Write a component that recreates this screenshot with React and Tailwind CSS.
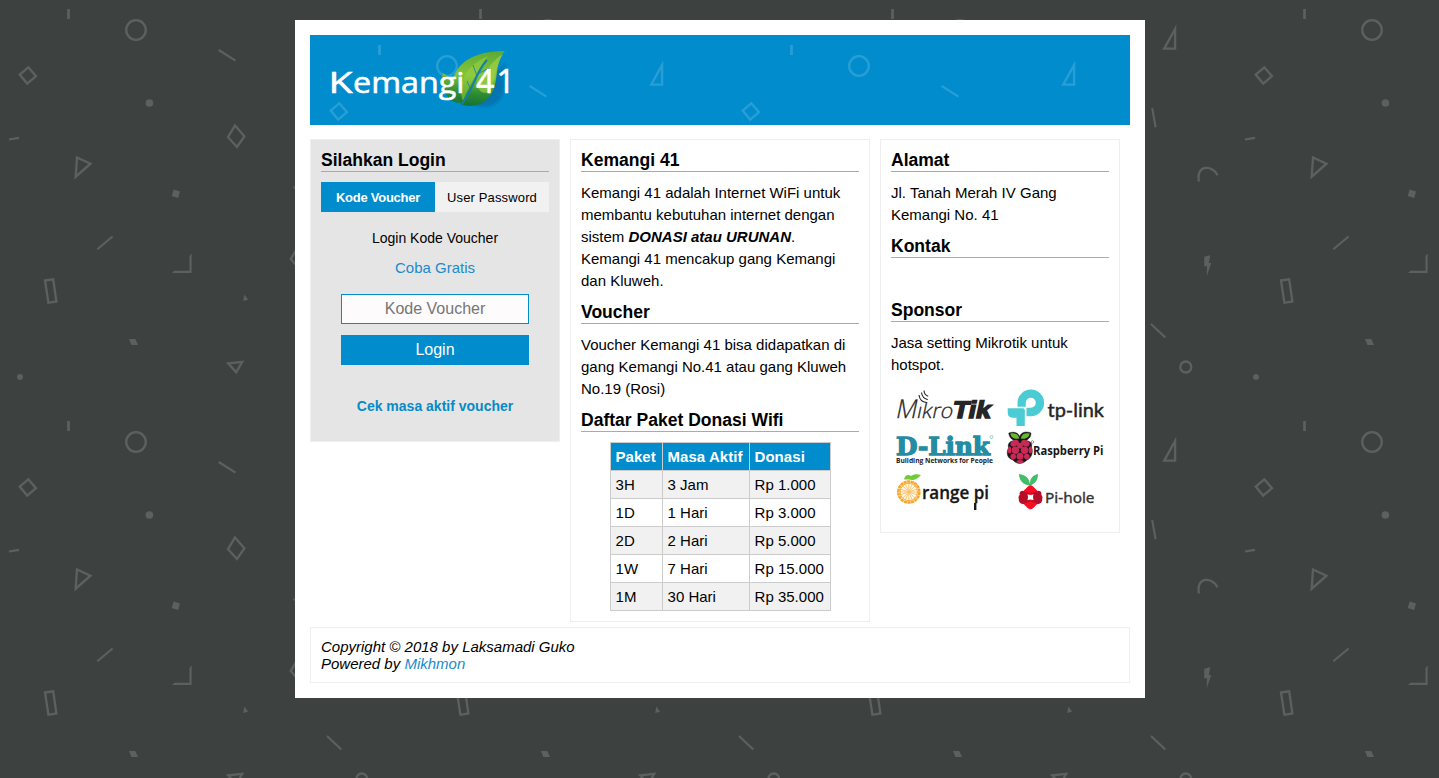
import React from "react";

function Confetti({ id, opacity, offset = 0 }) {
  return (
    <svg className="absolute inset-0 h-full w-full" aria-hidden="true">
      <defs>
        <pattern id={id} x={offset} y={offset} width="412" height="412" patternUnits="userSpaceOnUse">
          <g fill="none" stroke="#fff" strokeOpacity={opacity} strokeWidth="2.3" strokeMiterlimit="10">
            <path d="M68.5 9v10" strokeWidth="2.7" />
            <circle cx="136" cy="30" r="9.8" />
            <path d="M218.7 50l16.8 10.7M9 139.5l10-1.6M97.3 249.3l15.3-12.8M328.2 108l3.4 19.2M327 324l14.3 13.5" strokeWidth="2.1" />
            <path d="M28.3 67.3L19.7 74.6L27.2 83.6L36 76.2Z" />
            <path d="M235 125.5L244.4 136.3L237 147L228 137.2Z" />
            <path d="M77 157.5L90.5 163.7L75.7 176.7Z" />
            <path d="M351.1 29V48.7H340.2Z" />
            <path d="M45 280.5L53.2 279.3L56.4 301.5L48.4 302.8Z" />
            <path d="M228.2 363.3L242.2 361.8L236.2 372.3Z" />
            <path d="M297 248.7L290.8 259L298 267.7L308 264L308 253Z" />
            <path d="M375 181.5C371.5 164 389 165 393.5 175.2" />
            <circle cx="361.8" cy="367" r="5.5" />
          </g>
          <g fill="#fff" fillOpacity={opacity}>
            <circle cx="149.4" cy="103" r="3.8" />
            <circle cx="20" cy="377" r="3" />
            <path d="M173.7 189.5L180 191.5L178.2 198L171.7 196Z" />
            <path d="M129 339H135.3L138 345H131.4Z" />
            <path d="M244.4 294.5L248 299.8L243.2 301Z" />
            <path d="M292.8 186L297 188L294 189Z" />
            <path d="M191.6 253.5V273H172L174.4 270.7H189.5V256Z" />
            <path d="M380.3 256.7L386.2 255.3L384.7 263H387.2L382.8 276L383 266.3H380.2Z" />
          </g>
        </pattern>
      </defs>
      <rect width="100%" height="100%" fill={`url(#${id})`} />
    </svg>
  );
}

function BrandLogo() {
  return (
    <svg className="relative mt-2.5" width="240" height="76" viewBox="0 0 240 76" aria-label="Kemangi 41">
      <defs>
        <linearGradient id="leaf" x1="0.6" y1="0" x2="0.5" y2="1">
          <stop offset="0" stopColor="#5eab34" />
          <stop offset="0.45" stopColor="#84c43c" />
          <stop offset="0.78" stopColor="#2c8b34" />
          <stop offset="1" stopColor="#167332" />
        </linearGradient>
        <filter id="soft" x="-30%" y="-30%" width="160%" height="160%">
          <feGaussianBlur stdDeviation="1.6" />
        </filter>
      </defs>
      <g transform="translate(20 0)">
        <path d="M178 17C168 27 181 48 166 58C160 63 153 62 146 60L153 34Z" fill="#08588f" opacity=".45" filter="url(#soft)" />
        <path d="M113 28C118 31 121 34 123 40L122 42C122 28 132 6 175 6C168 13 168 22 166 34C164 55 149 64 133 60L130 58C119 58 115 48 114 42C113 37 111 33 113 28Z" fill="url(#leaf)" />
        <path d="M133 56C128 42 132 22 158 11C149 21 141 38 133 56Z" fill="#9bd13f" opacity=".55" />
        <path d="M147 37C148 48 154 49 160 47C165 38 165 22 173 9C164 14 155 27 147 37Z" fill="#a6d54a" opacity=".6" />
        <path d="M131 60C142 48 145 28 157 15" fill="none" stroke="#127eae" strokeWidth="2" />
        <path d="M141 45L137 36M147 31L143 20M149 28L160 23M130 58C125 53 122 49 118 44" fill="none" stroke="#127eae" strokeWidth=".8" />
      </g>
      <g fontFamily="'Open Sans', sans-serif" fill="#fff" stroke="#fff" strokeWidth=".6">
        <text y="47.5" fontSize="30">
          <tspan x="18.5" textLength="24" lengthAdjust="spacingAndGlyphs">K</tspan>
          <tspan x="43" textLength="111.5" lengthAdjust="spacingAndGlyphs">emangi</tspan>
        </text>
        <text x="166 186.5" y="47.5" fontSize="32">41</text>
      </g>
    </svg>
  );
}

const sponsorText = "'Open Sans', sans-serif";

function MikroTik() {
  return (
    <svg className="overflow-visible" width="111" height="43" aria-label="MikroTik">
      <g transform="translate(4 31.7) skewX(-12)" fill="#252527">
        <text x="0" y="0" fontFamily="'Open Sans', sans-serif" fontSize="26" fontWeight="300" stroke="#252527" strokeWidth=".3" textLength="21" lengthAdjust="spacingAndGlyphs">M</text>
        <text x="21" y="0" fontFamily="'Open Sans', sans-serif" fontSize="21" fontWeight="300" stroke="#252527" strokeWidth=".3" textLength="36" lengthAdjust="spacingAndGlyphs">ıkro</text>
        <text x="56.5" y="0" fontFamily="'Liberation Sans', sans-serif" fontSize="24" fontWeight="700" stroke="#252527" strokeWidth="1.5" textLength="38" lengthAdjust="spacingAndGlyphs">Tik</text>
      </g>
      <path d="M29 9C29.5 13.5 32 16 36.5 16.5M31.5 6.5C32 10.5 34 12.8 37.7 13.6M34 4.5C34.2 7.5 35.5 9.4 38.2 10.3" transform="translate(-1 0)" fill="none" stroke="#252527" strokeWidth="1.1" />
    </svg>
  );
}

function TpLink() {
  return (
    <svg className="overflow-visible" width="107" height="43" aria-label="tp-link">
      <path d="M15.5 20.7V16.7A13.3 13.3 0 1 1 28.8 30.2H24.5V21.7H28.8A5 5 0 1 0 23.8 16.7V20.7Z" fill="#4bcbd4" />
      <path d="M5.7 22.3H21Q22.8 22.3 22.8 24.2V40H14.5V31.8H10.5Q5.7 31.5 5.7 26.5Z" fill="#4bcbd4" />
      <text x="45.5" y="31" fontFamily="Lato, sans-serif" fontSize="20" fill="#252525" stroke="#252525" strokeWidth=".45" textLength="56.5" lengthAdjust="spacingAndGlyphs">tp-link</text>
    </svg>
  );
}

function DLink() {
  return (
    <svg className="overflow-visible" width="111" height="43" aria-label="D-Link">
      <text x="5" y="25.5" fontFamily="'DejaVu Serif', serif" fontSize="24.5" fontWeight="700" fill="#248ca3" stroke="#248ca3" strokeWidth="1.3" textLength="94" lengthAdjust="spacingAndGlyphs">D-Link</text>
      <circle cx="100.5" cy="8" r="1.5" fill="none" stroke="#248ca3" strokeWidth=".4" />
      <text x="5" y="34" fontFamily={sponsorText} fontSize="7.4" fontWeight="700" fill="#222" textLength="97" lengthAdjust="spacingAndGlyphs">Building Networks for People</text>
    </svg>
  );
}

function RaspberryPi() {
  return (
    <svg className="overflow-visible" width="107" height="43" aria-label="Raspberry Pi">
      <path d="M17.5 11C10 13 7 8 6.8 4C12 2 17 4 17.5 8C19 3 24 2 29 4C29 9 25 13 18 11C31 11 30 16 29.5 18C32 25 28 30 25 31C20 36 14 35 11 31C5 29 4 24 6.5 19C5 13 10 11 17.5 11Z" fill="#171717" stroke="#171717" strokeWidth=".5" />
      <path d="M8.3 4.5C13 3.4 16.5 5 17.2 9.4C12 10.8 8.6 8 8.3 4.5ZM27.7 4.5C23 3.4 19.5 5 18.8 9.4C24 10.8 27.4 8 27.7 4.5Z" fill="#67b82e" />
      <g fill="#cc2855">
        <ellipse cx="12.6" cy="14.2" rx="4.4" ry="3" transform="rotate(-25 12.6 14.2)" />
        <ellipse cx="23.4" cy="14.2" rx="4.4" ry="3" transform="rotate(25 23.4 14.2)" />
        <circle cx="18" cy="16.6" r="2.9" />
        <circle cx="13.4" cy="21.2" r="3.7" />
        <circle cx="22.6" cy="21.2" r="3.7" />
        <ellipse cx="7.6" cy="21" rx="1.8" ry="3.6" />
        <ellipse cx="28.4" cy="21" rx="1.8" ry="3.6" />
        <circle cx="18" cy="27.2" r="3.5" />
        <circle cx="11.2" cy="27.6" r="2.8" />
        <circle cx="24.8" cy="27.6" r="2.8" />
        <ellipse cx="18" cy="32.5" rx="3.5" ry="1.5" />
      </g>
      <circle cx="30.5" cy="13" r="1.3" fill="none" stroke="#333" strokeWidth=".5" />
      <text x="31" y="25.7" fontFamily={sponsorText} fontSize="11.8" fontWeight="700" fill="#171717" textLength="70.5" lengthAdjust="spacingAndGlyphs">Raspberry Pi</text>
    </svg>
  );
}

function OrangePi() {
  return (
    <svg className="overflow-visible" width="111" height="43" aria-label="Orange Pi">
      <circle cx="17.8" cy="20" r="10.5" fill="#fff8e9" stroke="#f9a72c" strokeWidth="2.6" strokeDasharray="3.2 .45" />
      <g stroke="#fbc36a" strokeWidth=".9" transform="translate(.3 -1)">
        <path d="M17.5 12V30M8.5 21H26.5M11 14.5L24 27.5M24 14.5L11 27.5M14 13L21 29M21 13L14 29M9 18L26 24M9 24L26 18" />
      </g>
      <circle cx="17.8" cy="20" r="8.7" fill="none" stroke="#f9b33d" />
      <path d="M13 7.5C14 3 17 2 20 4C23 2 26 2 30 3C26 8 22 8.5 18 7.5Z" fill="#6fcb38" />
      <text x="31" y="26.7" fontFamily={sponsorText} fontSize="18.5" fontWeight="600" fill="#171717" stroke="#171717" strokeWidth=".3" textLength="67" lengthAdjust="spacingAndGlyphs">range pi</text>
      <path d="M84.2 31V38" fill="none" stroke="#171717" strokeWidth="2.4" />
    </svg>
  );
}

function PiHole() {
  return (
    <svg className="overflow-visible" width="107" height="43" aria-label="Pi-hole">
      <path d="M28 13.5C20 13 17 7 17 2C24 3 27 6 28 12C28 6 31 3 36 2C36 8 33 12 28 13.5Z" fill="#43bd6a" />
      <rect x="19" y="15.8" width="19" height="19" rx="4" transform="rotate(45 28.5 25.3)" fill="#f80d24" />
      <path d="M17.9 23.2Q16.5 19.5 20.5 18.8Q23 20.5 28.5 21L25 25.3L28.5 29.8Q24 30 21 32.2Q16.5 31 16.8 27.5Q16 25.3 17.9 23.2ZM39.1 23.2Q40.5 19.5 36.5 18.8Q34 20.5 28.5 21L32 25.3L28.5 29.8Q33 30 36 32.2Q40.5 31 40.2 27.5Q41 25.3 39.1 23.2Z" fill="#b50e29" />
      <path d="M25.5 22.3Q28.5 23.8 31.5 22.3Q30.2 25.3 31.5 28.3Q28.5 26.8 25.5 28.3Q26.8 25.3 25.5 22.3Z" fill="#fff" />
      <text x="43" y="30.7" fontFamily="'Noto Sans', sans-serif" fontSize="14.5" fill="#333" stroke="#333" strokeWidth=".35" textLength="49.5" lengthAdjust="spacingAndGlyphs">Pi-hole</text>
    </svg>
  );
}

function Heading({ children }) {
  return (
    <h3 className="h-[22px] border-b border-[#aaa] text-[17.55px] leading-[20px] font-bold whitespace-nowrap">
      {children}
    </h3>
  );
}

const packages = [
  ["3H", "3 Jam", "Rp 1.000"],
  ["1D", "1 Hari", "Rp 3.000"],
  ["2D", "2 Hari", "Rp 5.000"],
  ["1W", "7 Hari", "Rp 15.000"],
  ["1M", "30 Hari", "Rp 35.000"],
];

function LoginPanel() {
  return (
    <section className="h-[303px] w-[250px] border border-[#efefef] bg-[#e5e5e5] p-2.5">
      <Heading>Silahkan Login</Heading>
      <div className="mt-2.5 flex h-[30px] text-[13px]">
        <button className="w-1/2 bg-[#008ccd] pt-0.5 font-bold tracking-[-0.25px] text-white">Kode Voucher</button>
        <button className="w-1/2 bg-[#f1f1f1] pt-0.5 tracking-[0.14px]">User Password</button>
      </div>
      <div className="px-5 pt-[15px] text-center">
        <p className="text-[14px] leading-[22px]">Login Kode Voucher</p>
        <a className="mt-2 block text-[15px] leading-[22px] text-[#1b8bcb]">Coba Gratis</a>
        <input
          className="mt-[15px] block h-[30px] w-full border border-[#008ccd] bg-[#fdfbfc] text-center text-[16px] placeholder:text-[#757575]"
          placeholder="Kode Voucher"
        />
        <button className="mt-[11px] block h-[30px] w-full bg-[#008ccd] text-[16px] text-white">Login</button>
        <a className="mt-[30px] block text-[14px] leading-[22px] font-bold text-[#078aca]">Cek masa aktif voucher</a>
      </div>
    </section>
  );
}

function InfoPanel() {
  return (
    <section className="flex w-[300px] flex-col gap-2.5 border border-[#efefef] p-2.5">
      <Heading>Kemangi 41</Heading>
      <p>
        Kemangi 41 adalah Internet WiFi untuk
        <br />
        membantu kebutuhan internet dengan
        <br />
        sistem <b className="italic">DONASI atau URUNAN</b>.<br />
        Kemangi 41 mencakup gang Kemangi
        <br />
        dan Kluweh.
      </p>
      <Heading>Voucher</Heading>
      <p>
        Voucher Kemangi 41 bisa didapatkan di
        <br />
        gang Kemangi No.41 atau gang Kluweh
        <br />
        No.19 (Rosi)
      </p>
      <Heading>Daftar Paket Donasi Wifi</Heading>
      <div className="ml-[29px] grid w-[221px] grid-cols-[51px_86px_80px] gap-px border border-[#ccc] bg-[#ccc]">
        {["Paket", "Masa Aktif", "Donasi"].map((label) => (
          <div key={label} className="h-[27px] bg-[#008ccd] pl-[4.5px] leading-[27px] font-bold tracking-[0.06px] text-white">
            {label}
          </div>
        ))}
        {packages.map((row, i) =>
          row.map((cell) => (
            <div key={cell} className={`h-[27px] pl-[4.6px] leading-[27px] ${i % 2 ? "bg-white" : "bg-[#f1f1f1]"}`}>
              {cell}
            </div>
          ))
        )}
      </div>
    </section>
  );
}

function ContactPanel() {
  return (
    <section className="flex h-[394px] w-[240px] flex-col gap-2.5 border border-[#efefef] p-2.5">
      <Heading>Alamat</Heading>
      <p>
        Jl. Tanah Merah IV Gang
        <br />
        Kemangi No. 41
      </p>
      <Heading>Kontak</Heading>
      <p className="h-[22px]" />
      <Heading>Sponsor</Heading>
      <p>
        Jasa setting Mikrotik untuk
        <br />
        hotspot.
      </p>
      <div className="grid grid-cols-[111px_107px]">
        <MikroTik />
        <TpLink />
        <DLink />
        <RaspberryPi />
        <OrangePi />
        <PiHole />
      </div>
    </section>
  );
}

export default function App() {
  return (
    <div className="relative h-[778px] overflow-hidden bg-[#3d4140] pt-5 font-['Liberation_Sans',Arial,sans-serif] text-[15px] leading-[22px] text-black">
      <Confetti id="page-confetti" opacity={0.16} />
      <main className="relative ml-[295px] h-[678px] w-[850px] bg-white p-[15px]">
        <header className="relative flex h-[90px] items-start overflow-hidden bg-[#008ccd]">
          <Confetti id="header-confetti" opacity={0.16} offset={1} />
          <BrandLogo />
        </header>
        <div className="mt-3.5 flex h-[483px] items-start gap-2.5">
          <LoginPanel />
          <InfoPanel />
          <ContactPanel />
        </div>
        <footer className="mt-[5px] h-[56px] border border-[#efefef] p-2.5 leading-[17px] italic">
          Copyright © 2018 by Laksamadi Guko
          <br />
          Powered by <a className="text-[#1b8bcb]">Mikhmon</a>
        </footer>
      </main>
    </div>
  );
}
